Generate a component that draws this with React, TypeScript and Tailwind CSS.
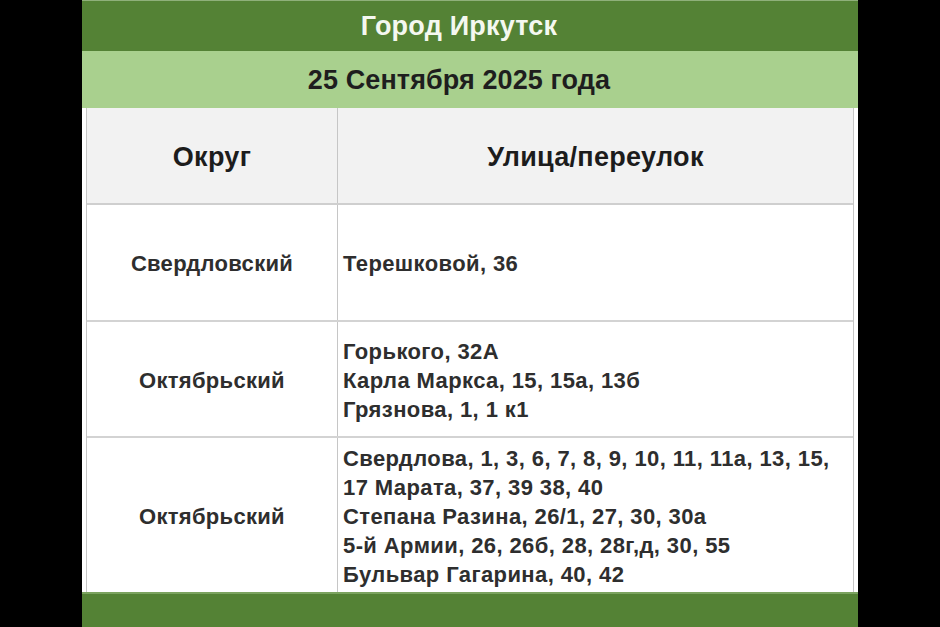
import React from "react";

const rows = [
  { district: "Свердловский", streets: ["Терешковой, 36"], h: "h-[117px]" },
  {
    district: "Октябрьский",
    streets: ["Горького, 32А", "Карла Маркса, 15, 15а, 13б", "Грязнова, 1, 1 к1"],
    h: "h-[116px]",
  },
  {
    district: "Октябрьский",
    streets: [
      "Свердлова, 1, 3, 6, 7, 8, 9, 10, 11, 11а, 13, 15,",
      "17 Марата, 37, 39 38, 40",
      "Степана Разина, 26/1, 27, 30, 30а",
      "5-й Армии, 26, 26б, 28, 28г,д, 30, 55",
      "Бульвар Гагарина, 40, 42",
    ],
    h: "h-[154px]",
  },
];

export default function App() {
  return (
    <div className="w-[940px] h-[627px] bg-black flex justify-center overflow-hidden font-['Liberation_Sans',Arial,sans-serif] font-bold">
      <div className="w-[776px] h-full bg-white flex flex-col">
        <div className="h-[51px] bg-[#548235] border-t border-[#8fb07a] flex items-center justify-center pr-[22px] text-[#f4f8f0] text-[27px] tracking-[0.2px]">
          Город Иркутск
        </div>
        <div className="h-[57px] bg-[#a9d08e] flex items-center justify-center pr-[22px] pt-[1px] text-[#1e1e1e] text-[27px] tracking-[0.1px]">
          25 Сентября 2025 года
        </div>
        <div className="px-[4px] flex-1 flex flex-col">
          <div className="flex-1 flex flex-col border-l border-r border-[#c6c6c6]">
            <div className="h-[97px] grid grid-cols-[251px_1fr] bg-[#f2f2f2] border-b-2 border-[#cfcfcf] text-[27px] text-[#1c1c1c] tracking-[0.3px] pt-[3px]">
              <div className="flex items-center justify-center border-r border-[#c6c6c6] -mt-[3px]"><span className="mt-[3px]">Округ</span></div>
              <div className="flex items-center justify-center">Улица/переулок</div>
            </div>
            {rows.map((r, i) => (
              <div
                key={i}
                className={`${r.h} grid grid-cols-[251px_1fr] text-[22px] text-[#2e2e2e] ${i < rows.length - 1 ? "border-b-2 border-[#d3d3d3]" : ""}`}
              >
                <div className="flex items-center justify-center border-r border-[#c6c6c6] tracking-[0.3px] pt-[2px]">{r.district}</div>
                <div className="flex flex-col justify-center pl-[5px] pt-[2px] leading-[29px] tracking-[0.4px]">
                  {r.streets.map((s, j) => (
                    <div key={j} className="whitespace-nowrap">{s}</div>
                  ))}
                </div>
              </div>
            ))}
          </div>
        </div>
        <div className="h-[35px] bg-[#548235] border-t-2 border-[#7ba35f]" />
      </div>
    </div>
  );
}
